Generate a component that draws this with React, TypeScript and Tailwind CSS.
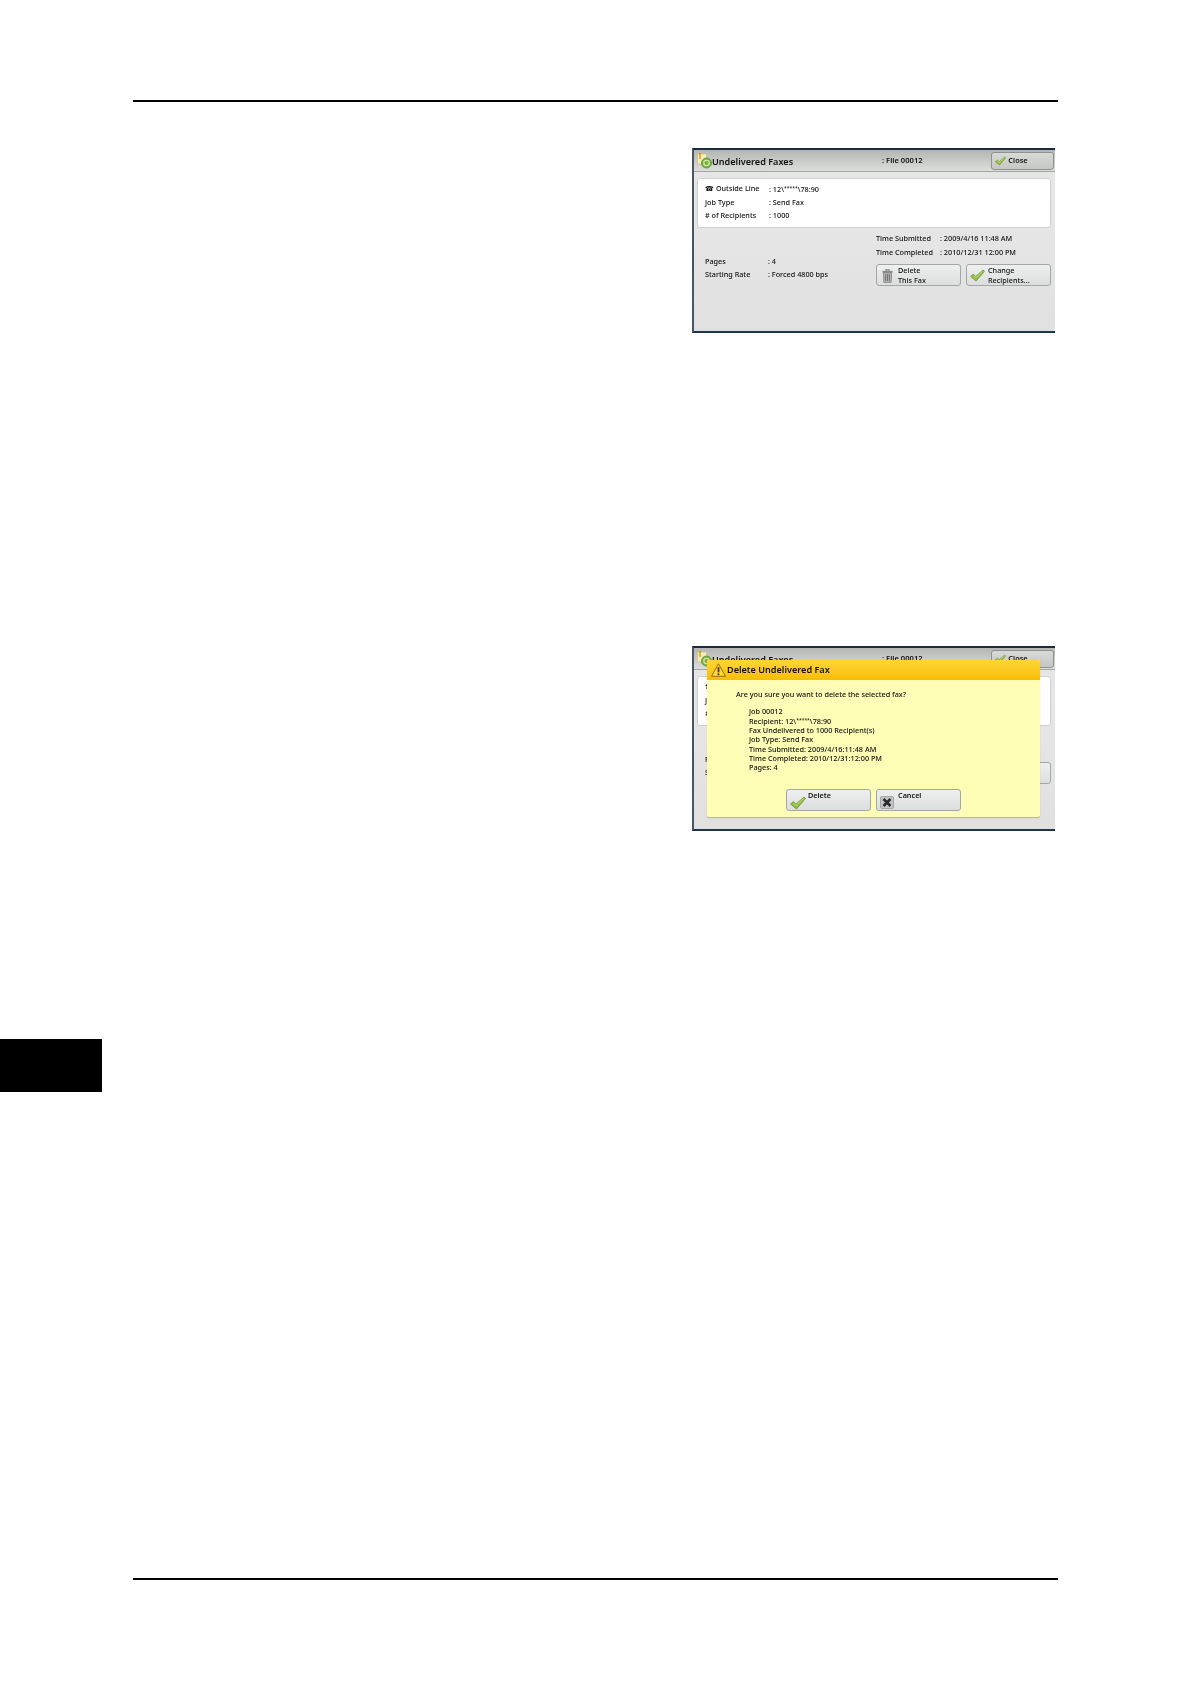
function Check({ className }: { className: string }) {
  return (
    <svg viewBox="0 0 16 14" className={className}>
      <path d="M0.5 8 L3.5 5.5 L6 8 L14 1 L15.5 2.5 L6.5 13 Z" fill="#8fbf3a" stroke="#5d7a2a" strokeWidth="0.6" />
      <path d="M3.5 7 L6 9.5 L13.5 2.5" fill="none" stroke="#c4dd78" strokeWidth="1" />
    </svg>
  );
}

function Trash({ className }: { className: string }) {
  return (
    <svg viewBox="0 0 12 16" className={className}>
      <path d="M4 1.5 H8 V3 H4 Z" fill="none" stroke="#777" strokeWidth="0.8" />
      <rect x="0.5" y="3" width="11" height="2" fill="#8a8a8a" />
      <path d="M1.5 5 H10.5 L10 15.5 H2 Z" fill="#b5b5b5" stroke="#6f6f6f" strokeWidth="0.7" />
      <path d="M4 6.5 V14 M6 6.5 V14 M8 6.5 V14" stroke="#666" strokeWidth="0.9" />
    </svg>
  );
}

function CancelIcon({ className }: { className: string }) {
  return (
    <svg viewBox="0 0 14 13" className={className}>
      <rect x="0.5" y="0.5" width="13" height="12" rx="1.5" fill="#c4c6c6" stroke="#a5a7a7" />
      <path d="M3.5 3 L10.5 10 M10.5 3 L3.5 10" stroke="#2b2b2b" strokeWidth="2.6" />
    </svg>
  );
}

function TitleIcon() {
  return (
    <svg viewBox="0 0 15 16" className="w-[15px] h-[16px] shrink-0">
      <rect x="0.5" y="1" width="9" height="10" fill="#f4eebc" stroke="#c7bd7a" strokeWidth="0.6" />
      <path d="M3 1 V6 M2 0.5 H4" stroke="#d69a00" strokeWidth="1.4" />
      <circle cx="9.5" cy="10" r="5" fill="#7cb342" stroke="#4f7f28" strokeWidth="0.7" />
      <circle cx="9.5" cy="10" r="2.7" fill="none" stroke="#d6ecb0" strokeWidth="1.1" />
    </svg>
  );
}

function Warn() {
  return (
    <svg viewBox="0 0 15 14" className="w-[15px] h-[14px] shrink-0">
      <path d="M7.5 0.8 L14.5 13.3 H0.5 Z" fill="#ffd92e" stroke="#7a5c10" strokeWidth="0.8" strokeLinejoin="round" />
      <path d="M7.5 4.2 V9.4" stroke="#5a2f0c" strokeWidth="1.8" />
      <circle cx="7.5" cy="11.3" r="1" fill="#5a2f0c" />
    </svg>
  );
}

function Masked() {
  return (
    <>
      12\<span className="text-[5px] align-[2px]">*****</span>\78:90
    </>
  );
}

function Btn({ icon, lines, textClass }: { icon: React.ReactNode; lines: string[]; textClass: string }) {
  return (
    <div className="w-[85px] h-[22px] flex rounded-[3px] border border-[#a4a6a6] bg-gradient-to-b from-[#eeefef] to-[#dcdede] leading-[10px] text-[#111]">
      {icon}
      <div className={textClass}>
        {lines.map((l) => (
          <div key={l}>{l}</div>
        ))}
      </div>
    </div>
  );
}

function InfoRow({ label, value, w }: { label: string; value: React.ReactNode; w: string }) {
  return (
    <div className="flex h-[13.7px] leading-[13.7px] whitespace-nowrap">
      <div className={w}>{label}</div>
      <div>{value}</div>
    </div>
  );
}

function Screen({ children }: { children?: React.ReactNode }) {
  return (
    <div className="relative w-[363px] h-[185px] flex flex-col border-t-2 border-b-2 border-l-2 border-t-[#1b2a3c] border-b-[#22344c] border-l-[#4a5662] bg-gradient-to-b from-[#e6e6e6] via-[#e5e5e5] to-[#e0e0e0] font-['Noto_Sans',sans-serif] font-medium text-[7.25px] text-[#111] blur-[0.3px]">
      <div className="h-[22px] flex items-center border-b border-[#a3a5a3] bg-gradient-to-b from-[#b4b6b3] to-[#dcdedb] pl-[3px] pr-[1px]">
        <TitleIcon />
        <div className="w-[171px] pt-[2px] text-[9.1px] font-semibold whitespace-nowrap text-[#111]">Undelivered Faxes</div>
        <div className="w-[110px] text-[7.6px] whitespace-nowrap font-semibold">: File 00012</div>
        <div className="w-[63px] h-[18px] flex items-center rounded-[3px] border border-[#8f918f] bg-gradient-to-b from-[#d8dad8] to-[#c5c7c5]">
          <Check className="w-[11px] h-[10px] ml-[3px]" />
          <span className="ml-[2px] font-semibold text-[7.4px]">Close</span>
        </div>
      </div>
      <div className="ml-[3px] mr-[4px] mt-[6px] h-[50px] rounded-[3px] border border-[#cfd1d1] bg-white pl-[7px] pt-[3px]">
        <InfoRow label="☎ Outside Line" value={<>: <Masked /></>} w="w-[64px]" />
        <InfoRow label="Job Type" value=": Send Fax" w="w-[64px]" />
        <InfoRow label="# of Recipients" value=": 1000" w="w-[64px]" />
      </div>
      <div className="flex ml-[11px] mt-[4px]">
        <div className="w-[171px] pt-[22.5px]">
          <InfoRow label="Pages" value=": 4" w="w-[63px]" />
          <InfoRow label="Starting Rate" value=": Forced 4800 bps" w="w-[63px]" />
        </div>
        <div className="flex flex-col">
          <InfoRow label="Time Submitted" value=": 2009/4/16 11:48 AM" w="w-[64px]" />
          <InfoRow label="Time Completed" value=": 2010/12/31 12:00 PM" w="w-[64px]" />
          <div className="flex gap-[5px] mt-[5px]">
            <Btn
              icon={<Trash className="w-[11px] h-[15px] ml-[5px] mt-[3px]" />}
              lines={["Delete", "This Fax"]}
              textClass="ml-[5px]"
            />
            <Btn
              icon={<Check className="w-[15px] h-[13px] ml-[3px] mt-[4px]" />}
              lines={["Change", "Recipients..."]}
              textClass="ml-[3px]"
            />
          </div>
        </div>
      </div>
      {children}
    </div>
  );
}

const details: React.ReactNode[] = [
  "Job 00012",
  <>Recipient: <Masked /></>,
  "Fax Undelivered to 1000 Recipient(s)",
  "Job Type: Send Fax",
  "Time Submitted: 2009/4/16:11:48 AM",
  "Time Completed: 2010/12/31:12:00 PM",
  "Pages: 4",
];

function Dialog() {
  return (
    <div className="absolute left-[13px] top-[12px] w-[333px] h-[157px] rounded-[2px] flex flex-col bg-[#fdfdb6] shadow-[0_1px_1px_rgba(150,140,60,0.5)]">
      <div className="h-[20px] flex items-center pl-[4px] rounded-t-[2px] bg-gradient-to-b from-[#ffd633] to-[#f8bc00]">
        <Warn />
        <span className="ml-[1px] text-[9.1px] font-semibold text-[#111] whitespace-nowrap">Delete Undelivered Fax</span>
      </div>
      <div className="pl-[29px] pt-[9px] leading-[10px] whitespace-nowrap">Are you sure you want to delete the selected fax?</div>
      <div className="pl-[42px] pt-[8px] leading-[9.15px] whitespace-nowrap">
        {details.map((d, i) => (
          <div key={i}>{d}</div>
        ))}
      </div>
      <div className="flex justify-center gap-[5px] mt-[17px]">
        <Btn
          icon={<Check className="w-[16px] h-[14px] ml-[3px] mt-[6px]" />}
          lines={["Delete"]}
          textClass="ml-[2px] font-semibold"
        />
        <Btn
          icon={<CancelIcon className="w-[14px] h-[13px] ml-[3px] mt-[6px]" />}
          lines={["Cancel"]}
          textClass="ml-[4px] font-semibold"
        />
      </div>
    </div>
  );
}

export default function App() {
  return (
    <div className="w-[1190px] h-[1684px] bg-white flex overflow-hidden">
      <div className="w-[102px] pt-[1039px] shrink-0">
        <div className="h-[53px] bg-black" />
      </div>
      <div className="ml-[31px] w-[925px] flex flex-col">
        <div className="mt-[100px] h-[1.5px] bg-black" />
        <div className="ml-[559px] mt-[46.5px]">
          <Screen />
        </div>
        <div className="ml-[559px] mt-[313px]">
          <Screen>
            <Dialog />
          </Screen>
        </div>
        <div className="mt-[747px] h-[1.5px] bg-black" />
      </div>
    </div>
  );
}
